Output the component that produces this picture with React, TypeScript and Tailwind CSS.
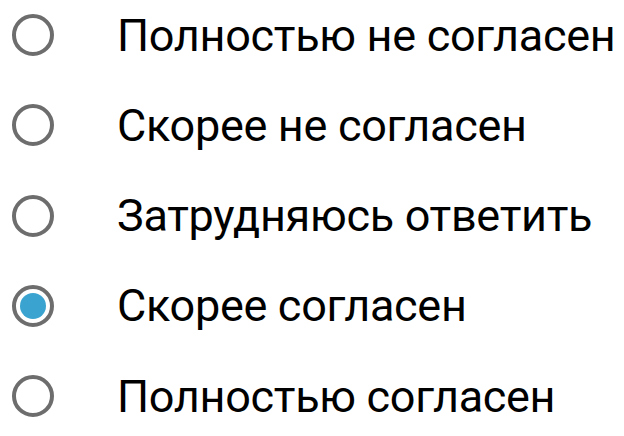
const options = [
  "Полностью не согласен",
  "Скорее не согласен",
  "Затрудняюсь ответить",
  "Скорее согласен",
  "Полностью согласен",
];

function Radio({ checked }: { checked: boolean }) {
  return (
    <div className="w-[42px] h-[42px] rounded-full border-[4px] border-[#6d6d6d] flex items-center justify-center shrink-0">
      {checked && <div className="w-[26px] h-[26px] rounded-full bg-[#3aa3cf]" />}
    </div>
  );
}

export default function App() {
  const selected = 3;
  return (
    <div
      className="w-[624px] h-[436px] bg-white overflow-hidden flex flex-col gap-[20.25px]"
      style={{ fontFamily: "Roboto, 'Noto Sans', sans-serif" }}
    >
      {options.map((label, i) => (
        <div key={label} className="h-[70px] shrink-0 flex items-center pl-3">
          <Radio checked={i === selected} />
          <span className="ml-[63px] text-[45px] leading-none tracking-[-0.3px] text-black whitespace-nowrap">
            {label}
          </span>
        </div>
      ))}
    </div>
  );
}
